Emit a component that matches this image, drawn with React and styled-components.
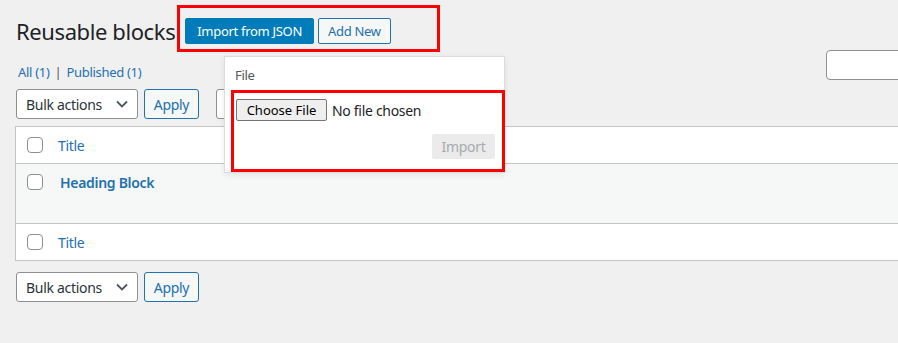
import React from "react";
import styled, { createGlobalStyle } from "styled-components";

const GlobalStyle = createGlobalStyle`
  html, body {
    margin: 0;
    padding: 0;
    background: #f0f0f1;
    overflow: hidden;
  }
  body {
    font-family: "Noto Sans", "Open Sans", sans-serif;
    color: #3c434a;
    font-size: 13px;
    letter-spacing: -0.3px;
  }
  button {
    letter-spacing: inherit;
  }
`;

const Wrap = styled.div`
  position: relative;
  width: 1000px;
  padding: 5px 0 0 15px;
`;

const Header = styled.div`
  display: flex;
  align-items: flex-start;
`;

const PageTitle = styled.h1`
  margin: 11px 2px 0 1px;
  font-size: 22px;
  font-weight: 400;
  line-height: 30px;
  color: #1d2327;
  letter-spacing: -0.4px;
`;

const Highlight = styled.div`
  display: flex;
  align-items: flex-start;
  gap: 4px;
  box-sizing: border-box;
  width: ${(p) => p.$w}px;
  height: ${(p) => p.$h}px;
  border: 3px solid #f00;
  padding: ${(p) => p.$pad};
`;

const TitleAction = styled.button`
  box-sizing: border-box;
  height: 26px;
  padding: ${(p) => (p.$primary ? "0 11px" : "0 9px")};
  border-radius: 2px;
  font-family: inherit;
  font-size: 13px;
  line-height: 24px;
  cursor: pointer;
  border: 1px solid ${(p) => (p.$primary ? "#007cba" : "#2271b1")};
  background: ${(p) => (p.$primary ? "#007cba" : "#f6f7f7")};
  color: ${(p) => (p.$primary ? "#fff" : "#2271b1")};
`;

const FilterRow = styled.div`
  display: flex;
  align-items: flex-start;
  height: 30px;
  margin-top: -2px;
`;

const Views = styled.div`
  margin: 13px 0 0 3px;
  font-size: 13px;
  color: #50575e;
  a {
    color: #2271b1;
    text-decoration: none;
  }
  span {
    margin: 0 5px;
  }
`;

const SearchBox = styled.input`
  box-sizing: border-box;
  margin-left: auto;
  margin-right: 39px;
  width: 150px;
  height: 30px;
  border: 1px solid #8c8f94;
  border-radius: 4px;
  background: #fff;
`;

const TableNav = styled.div`
  display: flex;
  align-items: center;
  gap: 6px;
  height: 30px;
  margin: ${(p) => p.$margin};
  padding-left: 1px;
`;

const Select = styled.div`
  box-sizing: border-box;
  display: flex;
  align-items: center;
  justify-content: space-between;
  width: ${(p) => p.$w || 122}px;
  height: 30px;
  padding: 0 9px 0 9px;
  background: #fff;
  border: 1px solid #8c8f94;
  border-radius: 3px;
  font-size: 14px;
  color: #2c3338;
`;

const Chevron = () => (
  <svg width="12" height="8" viewBox="0 0 12 8">
    <path d="M1 1.5l5 5 5-5" fill="none" stroke="#50575e" strokeWidth="1.8" />
  </svg>
);

const ApplyButton = styled.button`
  box-sizing: border-box;
  height: 30px;
  width: 55px;
  border: 1px solid #2271b1;
  border-radius: 3px;
  background: #f6f7f7;
  color: #2271b1;
  font-family: inherit;
  font-size: 14px;
  padding: 0;
`;

const Gap = styled.div`
  width: 5px;
`;

const Table = styled.div`
  border: 1px solid #c3c4c7;
  background: #fff;
`;

const Row = styled.div`
  display: flex;
  align-items: flex-start;
  box-sizing: border-box;
  height: ${(p) => p.$h}px;
  padding: ${(p) => p.$pad};
  background: ${(p) => (p.$alt ? "#f6f7f7" : "#fff")};
  border-top: ${(p) => (p.$line ? "1px solid #c3c4c7" : "none")};
`;

const Check = styled.span`
  box-sizing: border-box;
  flex: none;
  width: 16px;
  height: 16px;
  margin-left: 11px;
  border: 1px solid #8c8f94;
  border-radius: 4px;
  background: #fff;
`;

const ColLink = styled.a`
  margin-left: ${(p) => p.$ml}px;
  font-size: 14px;
  line-height: 18px;
  color: #2271b1;
  font-weight: ${(p) => (p.$bold ? 600 : 400)};
  text-decoration: none;
`;

const Dropdown = styled.div`
  position: absolute;
  left: 224px;
  top: 56px;
  box-sizing: border-box;
  width: 281px;
  background: #fff;
  border: 1px solid #dcdcde;
  box-shadow: 0 2px 6px rgba(0, 0, 0, 0.08);
`;

const FieldLabel = styled.div`
  padding: 9px 0 0 10px;
  height: 24px;
  font-size: 13px;
  color: #50575e;
`;

const UploadBox = styled.div`
  box-sizing: border-box;
  margin-left: 6px;
  width: 274px;
  height: 82px;
  border: 3px solid #f00;
  padding: 6px 7px 0 2px;
  display: flex;
  flex-direction: column;
`;

const FileLine = styled.div`
  display: flex;
  align-items: center;
  gap: 5px;
  font-size: 14px;
  color: #1d2327;
`;

const ChooseButton = styled.button`
  box-sizing: border-box;
  flex: none;
  height: 22px;
  width: 91px;
  padding: 0;
  border: 1px solid #767676;
  border-radius: 2px;
  background: #efefef;
  font-family: inherit;
  font-size: 13px;
  letter-spacing: 0;
  color: #000;
`;

const ImportButton = styled.button`
  align-self: flex-end;
  box-sizing: border-box;
  margin-top: 13px;
  width: 63px;
  height: 25px;
  border: none;
  border-radius: 2px;
  background: #ebebeb;
  color: #a7aaad;
  font-family: inherit;
  font-size: 14px;
  padding: 0;
`;

export default function App() {
  return (
    <>
      <GlobalStyle />
      <Wrap>
        <Header>
          <PageTitle>Reusable blocks</PageTitle>
          <Highlight $w={263} $h={47} $pad="10px 0 0 5px">
            <TitleAction $primary>Import from JSON</TitleAction>
            <TitleAction>Add New</TitleAction>
          </Highlight>
        </Header>

        <FilterRow>
          <Views>
            <a href="#all">All (1)</a>
            <span>|</span>
            <a href="#published">Published (1)</a>
          </Views>
          <SearchBox type="search" />
        </FilterRow>

        <TableNav $margin="9px 0 7px">
          <Select>
            Bulk actions
            <Chevron />
          </Select>
          <ApplyButton>Apply</ApplyButton>
          <Gap />
          {/* date filter, hidden under the import dropdown */}
          <Select $w={120} />
        </TableNav>

        <Table>
          <Row $h={36} $pad="10px 0 0 0">
            <Check />
            <ColLink $ml={15} href="#t">Title</ColLink>
          </Row>
          <Row $h={60} $pad="10px 0 0 0" $alt $line>
            <Check />
            <ColLink $ml={17} $bold href="#h">
              Heading Block
            </ColLink>
          </Row>
          <Row $h={37} $pad="10px 0 0 0" $line>
            <Check />
            <ColLink $ml={15} href="#t">Title</ColLink>
          </Row>
        </Table>

        <TableNav $margin="11px 0 0">
          <Select>
            Bulk actions
            <Chevron />
          </Select>
          <ApplyButton>Apply</ApplyButton>
        </TableNav>

        <Dropdown>
          <FieldLabel>File</FieldLabel>
          <UploadBox>
            <FileLine>
              <ChooseButton>Choose File</ChooseButton>
              <span>No file chosen</span>
            </FileLine>
            <ImportButton disabled>Import</ImportButton>
          </UploadBox>
        </Dropdown>
      </Wrap>
    </>
  );
}
